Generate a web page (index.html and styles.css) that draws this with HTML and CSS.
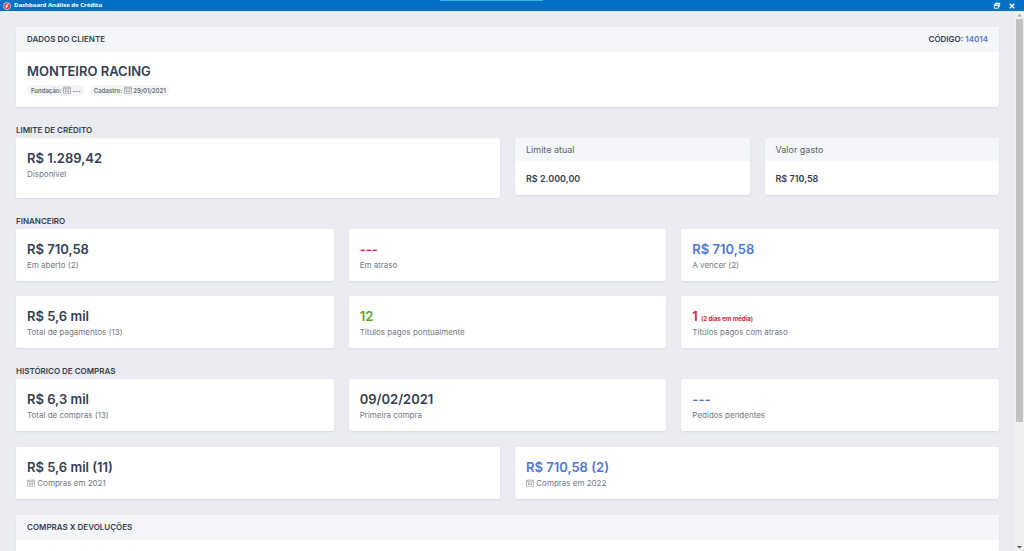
FILE: index.html
```html
<!DOCTYPE html>
<html lang="pt-BR">
<head>
<meta charset="utf-8">
<meta name="viewport" content="width=device-width, initial-scale=1">
<title>Dashboard Análise de Crédito</title>
<link rel="stylesheet" href="styles.css">
</head>
<body>
<svg class="defs" aria-hidden="true">
  <symbol id="calendar" viewBox="0 0 16 16">
    <path d="M1 2.500h14v12H1zM1 5.500h14M4.500 1v2M11.500 1v2" fill="none" stroke="currentColor"/>
    <path d="M4 7.500h2v1.500H4zM7 7.500h2v1.500H7zM10 7.500h2v1.500h-2zM4 10.500h2V12H4zM7 10.500h2V12H7zM10 10.500h2V12h-2z" fill="currentColor"/>
  </symbol>
</svg>
<header class="titlebar">
  <svg class="logo" viewBox="0 0 18 18" aria-hidden="true"><circle cx="9" cy="9" r="8.500" fill="#fbdada"/><circle cx="9" cy="9" r="7" fill="#d8394a"/><path d="M4 10l7-6 2 1-4 4 3 0-5 5-1-2 2-2z" fill="#fff"/></svg>
  <h1 class="titlebar-text">Dashboard Análise de Crédito</h1>
  <span class="accent"></span>
  <button class="win-btn" type="button" aria-label="Restaurar"><svg viewBox="0 0 18 18"><path d="M5 6V3.500h10V10h-2" fill="none" stroke="#fff" stroke-width="2"/><path d="M3 7h9v7H3z" fill="none" stroke="#fff" stroke-width="2"/><path d="M2 7h11M5 3h11" stroke="#fff" stroke-width="3"/></svg></button>
  <button class="win-btn" type="button" aria-label="Fechar"><svg viewBox="0 0 18 18"><path d="M4 4l10 10M14 4L4 14" stroke="#fff" stroke-width="3"/></svg></button>
</header>
<div class="viewport">
  <main class="content">
    <section class="card">
      <div class="card-head"><h2 class="heading">Dados do cliente</h2><span class="heading">Código: <a class="link" href="#">14014</a></span></div>
      <div class="card-body client">
        <p class="value">MONTEIRO RACING</p>
        <div class="tags">
          <span class="tag">Fundação: <svg class="icon"><use href="#calendar"/></svg> ---</span>
          <span class="tag">Cadastro: <svg class="icon"><use href="#calendar"/></svg> 29/01/2021</span>
        </div>
      </div>
    </section>

    <section class="group">
      <h2 class="heading">Limite de crédito</h2>
      <div class="row halves">
        <article class="card card-body tall"><p class="value">R$ 1.289,42</p><p class="caption">Disponível</p></article>
        <div class="row halves">
          <article class="card"><h3 class="card-head sub">Limite atual</h3><p class="amount">R$ 2.000,00</p></article>
          <article class="card"><h3 class="card-head sub">Valor gasto</h3><p class="amount">R$ 710,58</p></article>
        </div>
      </div>
    </section>

    <section class="group">
      <h2 class="heading">Financeiro</h2>
      <div class="row thirds">
        <article class="card card-body"><p class="value">R$ 710,58</p><p class="caption">Em aberto (2)</p></article>
        <article class="card card-body"><p class="value red">---</p><p class="caption">Em atraso</p></article>
        <article class="card card-body"><p class="value blue">R$ 710,58</p><p class="caption">A vencer (2)</p></article>
        <article class="card card-body"><p class="value">R$ 5,6 mil</p><p class="caption">Total de pagamentos (13)</p></article>
        <article class="card card-body"><p class="value green">12</p><p class="caption">Títulos pagos pontualmente</p></article>
        <article class="card card-body"><p class="value red">1 <small class="note">(2 dias em média)</small></p><p class="caption">Títulos pagos com atraso</p></article>
      </div>
    </section>

    <section class="group">
      <h2 class="heading">Histórico de compras</h2>
      <div class="row thirds">
        <article class="card card-body"><p class="value">R$ 6,3 mil</p><p class="caption">Total de compras (13)</p></article>
        <article class="card card-body"><p class="value">09/02/2021</p><p class="caption">Primeira compra</p></article>
        <article class="card card-body"><p class="value blue">---</p><p class="caption">Pedidos pendentes</p></article>
      </div>
      <div class="row halves next">
        <article class="card card-body"><p class="value">R$ 5,6 mil (11)</p><p class="caption"><svg class="icon"><use href="#calendar"/></svg> Compras em 2021</p></article>
        <article class="card card-body"><p class="value blue">R$ 710,58 (2)</p><p class="caption"><svg class="icon"><use href="#calendar"/></svg> Compras em 2022</p></article>
      </div>
    </section>

    <section class="card chart">
      <div class="card-head"><h2 class="heading">Compras x devoluções</h2></div>
    </section>
  </main>
  <div class="scrollbar" aria-hidden="true">
    <svg class="arrow" viewBox="0 0 9 8"><path d="M2 5.500L4.500 3 7 5.500z" fill="#a3a3a3"/></svg>
    <div class="track"><div class="thumb"></div></div>
    <svg class="arrow" viewBox="0 0 9 8"><path d="M2 3L4.500 5.500 7 3z" fill="#505050"/></svg>
  </div>
</div>
</body>
</html>
```
FILE: styles.css
```css
* { box-sizing: border-box; margin: 0; padding: 0; }
body {
  height: 100vh;
  display: flex;
  flex-direction: column;
  overflow: hidden;
  background: #eaecf2;
  color: #354052;
  font-family: Inter, "Liberation Sans", sans-serif;
  font-size: 8px;
}
.defs { position: absolute; width: 0; height: 0; }
.titlebar {
  position: relative;
  flex: none;
  height: 11px;
  display: flex;
  align-items: center;
  padding: 0 8px 0 3px;
  gap: 7px;
  background: #0270c5;
  color: #fff;
}
.logo { width: 8px; height: 8px; margin-right: -4px; }
.titlebar-text { flex: 1; font: 700 6px/11px "Noto Sans", sans-serif; }
.accent { position: absolute; top: 0; left: 43%; width: 10%; height: 1px; background: #45b0e6; }
.win-btn { display: flex; border: 0; background: none; }
.win-btn svg { width: 8px; height: 8px; }
.viewport { flex: 1; min-height: 0; display: flex; }
.content {
  flex: 1;
  min-width: 0;
  overflow: hidden;
  display: flex;
  flex-direction: column;
  gap: 16px;
  padding: 16px 16px 0;
}
.content > * { flex: none; }
.card {
  overflow: hidden;
  border-radius: 2px;
  background: #fff;
  box-shadow: 0 1px 2px rgba(53, 64, 82, 0.1);
}
.card-head {
  display: flex;
  align-items: center;
  justify-content: space-between;
  height: 25px;
  padding: 0 11px;
  background: #f5f6f9;
}
.card-head.sub { height: 23px; font-size: 9px; font-weight: 400; color: #5b6370; }
.heading {
  font-size: 8px;
  line-height: 15px;
  font-weight: 600;
  text-transform: uppercase;
}
.link { color: #5675cf; text-decoration: none; }
.card-body { padding: 12px 11px 9px; }
.card-body.client { padding: 11px 11px 11px; }
.card-body.tall { padding-bottom: 17px; }
.value { font-size: 13px; line-height: 17px; font-weight: 600; }
.caption { font-size: 8px; line-height: 14px; color: #717983; }
.icon { width: 8px; height: 8px; vertical-align: -1px; color: #717983; }
.amount { padding: 12px 11px 11px; font-size: 9px; line-height: 11px; font-weight: 600; }
.tags { display: flex; gap: 5px; padding-top: 5px; }
.tag {
  padding: 0 4px;
  border-radius: 5px;
  background: #f4f5f7;
  font-size: 6px;
  line-height: 11px;
  font-weight: 600;
  color: #656d79;
}
.row { display: grid; gap: 15px; align-items: start; }
.halves { grid-template-columns: 1fr 1fr; }
.thirds { grid-template-columns: repeat(3, 1fr); }
.next { margin-top: 16px; }
.note { font-size: 6px; line-height: 6px; font-weight: 700; }
.blue { color: #4f76d6; }
.red { color: #cd2937; }
.green { color: #5ba319; }
.chart { min-height: 160px; }
.scrollbar { flex: none; width: 9px; display: flex; flex-direction: column; background: #f0f0f0; }
.arrow { width: 9px; height: 8px; flex: none; }
.track { flex: 1; padding: 0 1px; }
.thumb { height: 77%; background: #c1c1c1; }
```
